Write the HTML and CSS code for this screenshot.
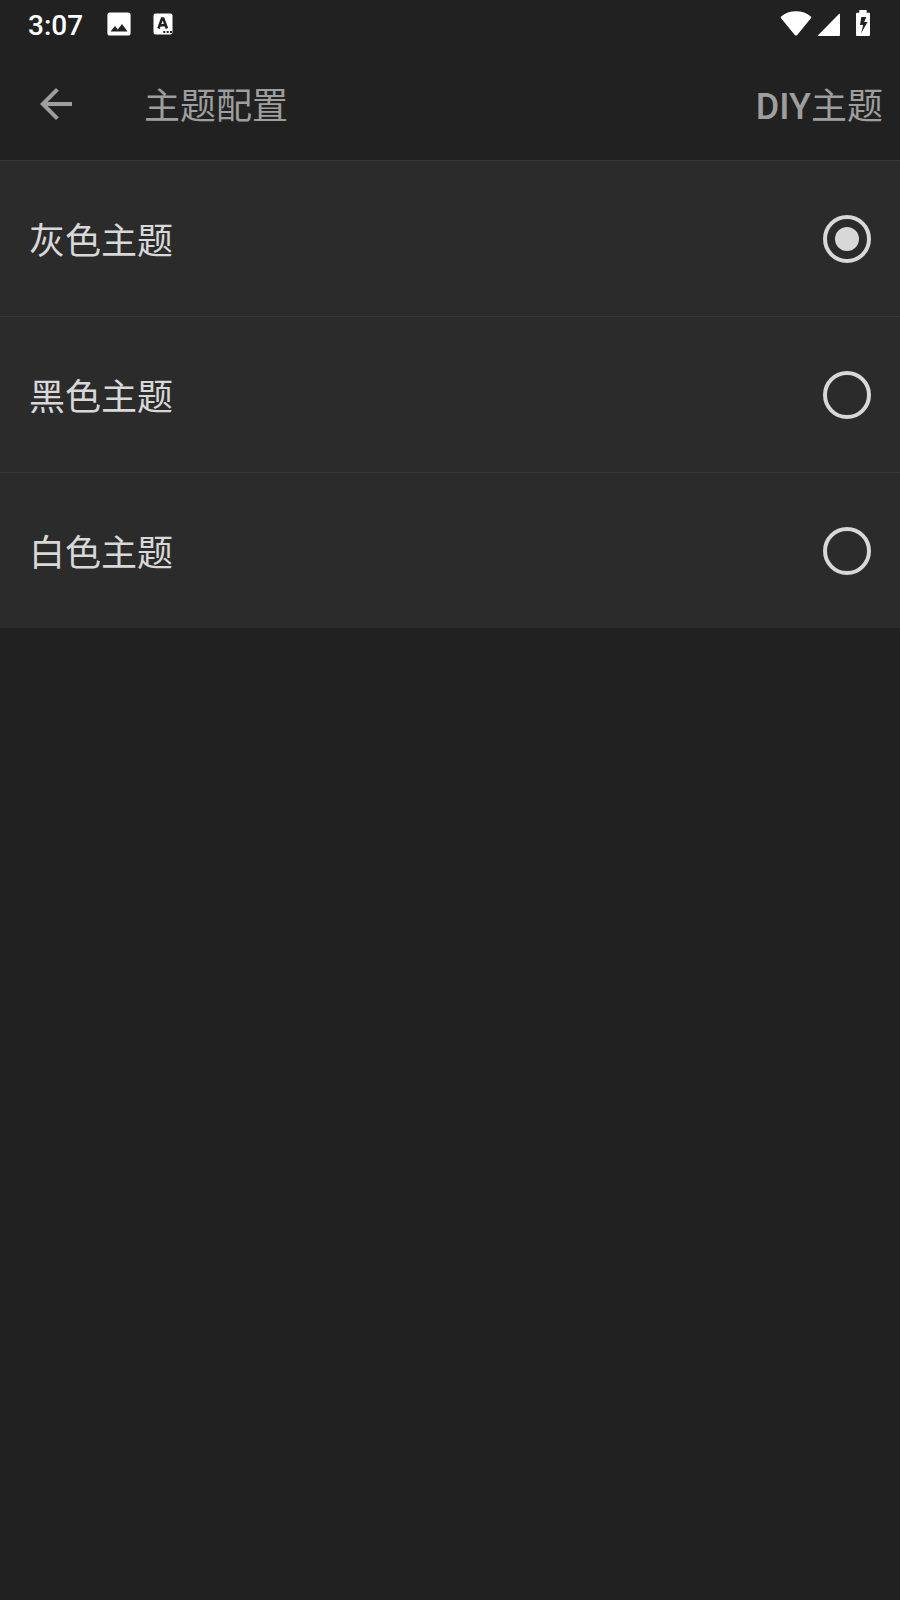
FILE: index.html
```html
<!DOCTYPE html>
<html lang="zh-CN">
  <head>
    <meta charset="utf-8">
    <title>主题配置</title>
    <link rel="stylesheet" href="styles.css">
  </head>
  <body>
    <div class="status-bar">
      <span class="clock">3:07</span>
      <svg class="icon-image" width="24" height="24" viewBox="0 0 24 24">
        <path fill="#fff" fill-rule="evenodd" d="M3 .5h18a2.600 2.600 0 0 1 2.600 2.600v17.800a2.600 2.600 0 0 1-2.600 2.600H3a2.600 2.600 0 0 1-2.600-2.600V3.100A2.600 2.600 0 0 1 3 .5zM3.500 19.500h17L15 12l-4.200 5.500L8 14z"/>
      </svg>
      <svg class="icon-lang" width="20" height="22" viewBox="0 0 20 22">
        <rect x=".5" y=".5" width="19" height="21" rx="2" fill="#fff"/>
        <path fill="none" stroke="#212121" stroke-width="2.600" d="M5.500 15.500L9 5.500h1.300l3.600 10M7 12.300h5.500"/>
        <path fill="#212121" d="M10.300 18h2v2h-2zM13.700 18h2v2h-2zM17 18h2v2h-2z"/>
      </svg>
      <div class="status-right">
        <svg width="32" height="26" viewBox="0 0 32 26">
          <path fill="#fff" d="M.8 6.700Q7.500 1.300 16 1.300t15.200 5.400q.4.700-.1 1.300L17.200 24.900q-1.200 1.200-2.400 0L.9 8q-.5-.6-.1-1.300z"/>
        </svg>
        <svg class="icon-signal" width="24" height="24" viewBox="0 0 24 24">
          <path fill="#fff" d="M22.200 1.800q.8-.4.800.5V23q0 1-1 1H1.800q-1.300-.1-.5-1.100z"/>
        </svg>
        <svg class="icon-battery" width="14" height="26" viewBox="0 0 14 26">
          <path fill="#fff" fill-rule="evenodd" d="M3.300 0h7.400v2.700H13q1 0 1 1V25q0 1-1 1H1q-1 0-1-1V3.700q0-1 1-1h2.300zM5.300 7L4 15h3.200L5 23.500 11.500 12H8.200L10.300 7z"/>
        </svg>
      </div>
    </div>

    <div class="toolbar">
      <svg class="back" width="48" height="48" viewBox="0 0 24 24">
        <path fill="#9e9e9e" d="M20 11H7.830l5.590-5.590L12 4l-8 8 8 8 1.410-1.410L7.830 13H20v-2z"/>
      </svg>
      <h1 class="title">主题配置</h1>
      <span class="action"><b>DIY</b>主题</span>
    </div>

    <div class="theme-list">
      <div class="theme-row">
        <span class="theme-name">灰色主题</span>
        <span class="radio checked"></span>
      </div>
      <div class="theme-row">
        <span class="theme-name">黑色主题</span>
        <span class="radio"></span>
      </div>
      <div class="theme-row">
        <span class="theme-name">白色主题</span>
        <span class="radio"></span>
      </div>
    </div>
  </body>
</html>
```
FILE: styles.css
```css
* {
  box-sizing: border-box;
}
body {
  margin: 0;
  min-height: 100vh;
  background: #212121;
  font-family: Roboto, 'Noto Sans CJK SC', sans-serif;
  font-size: 36px;
}
svg {
  display: block;
  flex: none;
}

.status-bar {
  display: flex;
  align-items: center;
  height: 48px;
  padding: 0 30px 0 28px;
  color: #fff;
}
.clock {
  width: 79px;
  padding-top: 4px;
  font-size: 28px;
  font-weight: 500;
  line-height: 32px;
}
.icon-lang {
  margin-left: 22px;
}
.status-right {
  display: flex;
  align-items: flex-end;
  height: 26px;
  margin: 0 0 2px auto;
}
.icon-signal {
  margin-left: 5px;
}
.icon-battery {
  margin-left: 15px;
}

.toolbar {
  display: flex;
  align-items: center;
  height: 112px;
  padding: 0 17px 0 32px;
  color: #9e9e9e;
}
.title {
  margin: 0 0 0 64px;
  padding-top: 6px;
  font-size: 36px;
  font-weight: 400;
  line-height: 52px;
}
.action {
  margin-left: auto;
  padding-top: 6px;
  line-height: 52px;
}
.action b {
  font-weight: 500;
}

.theme-row {
  display: flex;
  align-items: center;
  justify-content: space-between;
  height: 156px;
  padding: 0 29px;
  border-top: 1px solid #383838;
  background: #2b2b2b;
  color: #d8d8d8;
}
.theme-name {
  padding-top: 7px;
  line-height: 52px;
}
.radio {
  display: flex;
  align-items: center;
  justify-content: center;
  width: 48px;
  height: 48px;
  border: 4px solid #d8d8d8;
  border-radius: 50%;
}
.radio.checked::before {
  content: '';
  width: 24px;
  height: 24px;
  border-radius: 50%;
  background: #d8d8d8;
}
```
